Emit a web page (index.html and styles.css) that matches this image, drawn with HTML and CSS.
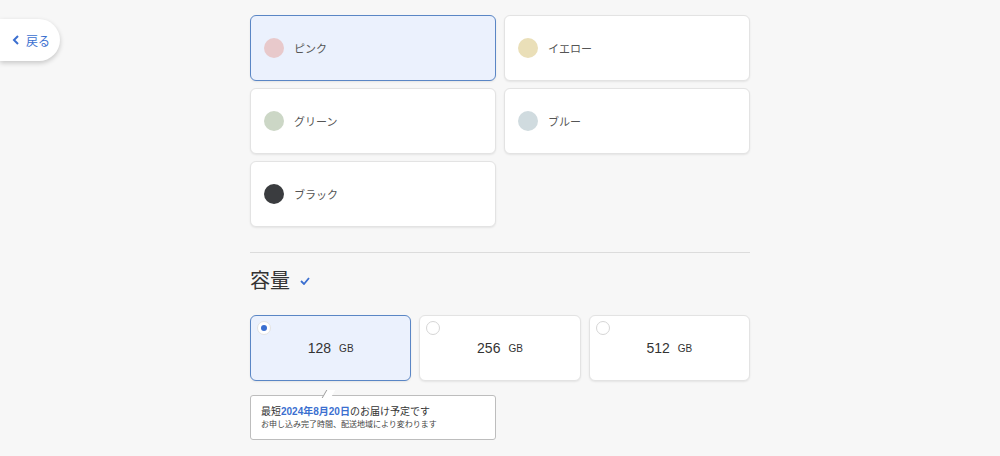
FILE: index.html
```html
<!DOCTYPE html>
<html lang="ja">
<head>
  <meta charset="UTF-8">
  <meta name="viewport" content="width=device-width, initial-scale=1.0">
  <title>カラー・容量</title>
  <link rel="stylesheet" href="styles.css">
</head>
<body>
  <a class="back" href="#">
    <svg width="8" height="10" viewBox="0 0 8 10"><path d="M6 1 L2 5 L6 9" fill="none" stroke="#3b6fd0" stroke-width="2"/></svg>
    <span>戻る</span>
  </a>

  <div class="main">
    <div class="colors">
      <div class="card color selected"><span class="dot" style="background:#e8c9cb"></span>ピンク</div>
      <div class="card color"><span class="dot" style="background:#eadfb8"></span>イエロー</div>
      <div class="card color"><span class="dot" style="background:#ccd7c6"></span>グリーン</div>
      <div class="card color"><span class="dot" style="background:#d0dbdf"></span>ブルー</div>
      <div class="card color"><span class="dot" style="background:#3a3c3f"></span>ブラック</div>
    </div>

    <hr class="divider">

    <h2 class="title">容量
      <svg width="10" height="8" viewBox="0 0 10 8"><path d="M1 4 L4 7 L9 1" fill="none" stroke="#3b6fd0" stroke-width="1.8"/></svg>
    </h2>

    <div class="sizes">
      <div class="card size selected"><span class="radio on"></span>128<small>GB</small></div>
      <div class="card size"><span class="radio"></span>256<small>GB</small></div>
      <div class="card size"><span class="radio"></span>512<small>GB</small></div>
    </div>

    <div class="delivery">
      <p class="line1">最短<b>2024年8月20日</b>のお届け予定です</p>
      <p class="line2">お申し込み完了時間、配送地域により変わります</p>
    </div>
  </div>
</body>
</html>
```

FILE: styles.css
```css
body {
  margin: 0;
  background: #f7f7f7;
  font-family: "Liberation Sans", "Noto Sans CJK JP", sans-serif;
  color: #333;
}
.back {
  position: absolute;
  left: 0;
  top: 19px;
  width: 60px;
  height: 42px;
  box-sizing: border-box;
  padding-left: 12px;
  display: flex;
  align-items: center;
  gap: 6px;
  background: #fff;
  border-radius: 0 21px 21px 0;
  box-shadow: 0 2px 5px rgba(0,0,0,0.2);
  color: #3b6fd0;
  font-size: 12px;
  text-decoration: none;
}
.main {
  width: 500px;
  margin: 0 auto;
  padding-top: 15px;
}
.card {
  background: #fff;
  border: 1px solid #e3e3e3;
  border-radius: 6px;
  box-shadow: 0 1px 2px rgba(0,0,0,0.08);
  box-sizing: border-box;
}
.card.selected {
  background: #ebf1fd;
  border-color: #5a86c5;
}
.colors {
  display: grid;
  grid-template-columns: 246px 246px;
  gap: 7px 8px;
}
.color {
  height: 66px;
  display: flex;
  align-items: center;
  padding-left: 13px;
  font-size: 11px;
  color: #555;
}
.dot {
  width: 20px;
  height: 20px;
  border-radius: 50%;
  margin-right: 10px;
}
.divider {
  border: 0;
  border-top: 1px solid #dcdcdc;
  margin: 25px 0 0;
}
.title {
  margin: 15px 0 0;
  font-size: 20px;
  font-weight: normal;
  color: #333;
  display: flex;
  align-items: center;
  gap: 10px;
  line-height: 26px;
}
.sizes {
  display: grid;
  grid-template-columns: repeat(3, 1fr);
  gap: 8px;
  margin-top: 21px;
}
.size {
  position: relative;
  height: 66px;
  display: flex;
  align-items: center;
  justify-content: center;
  font-size: 14px;
  color: #333;
}
.size small {
  font-size: 10px;
  margin-left: 8px;
}
.radio {
  position: absolute;
  left: 6px;
  top: 5px;
  width: 14px;
  height: 14px;
  border-radius: 50%;
  background: #fff;
  border: 1px solid #d6d6d6;
  box-sizing: border-box;
}
.radio.on {
  border-color: #e3e3e3;
}
.radio.on::after {
  content: "";
  position: absolute;
  left: 3px;
  top: 3px;
  width: 6px;
  height: 6px;
  border-radius: 50%;
  background: #3b6fd0;
}
.delivery {
  position: relative;
  width: 246px;
  box-sizing: border-box;
  margin-top: 14px;
  background: #fff;
  border: 1px solid #bdbdbd;
  border-radius: 3px;
  padding: 9px 10px 8px;
}
.delivery::before {
  content: "";
  position: absolute;
  left: 73px;
  top: -6px;
  width: 8px;
  height: 8px;
  background: #fff;
  border-left: 1px solid #9a9a9a;
  transform: skewX(-30deg);
}
.delivery p {
  margin: 0;
}
.line1 {
  font-size: 10px;
  line-height: 14px;
  color: #333;
}
.line1 b {
  font-weight: bold;
  color: #3b6fd0;
}
.line2 {
  font-size: 8px;
  line-height: 12px;
  color: #444;
}
```
